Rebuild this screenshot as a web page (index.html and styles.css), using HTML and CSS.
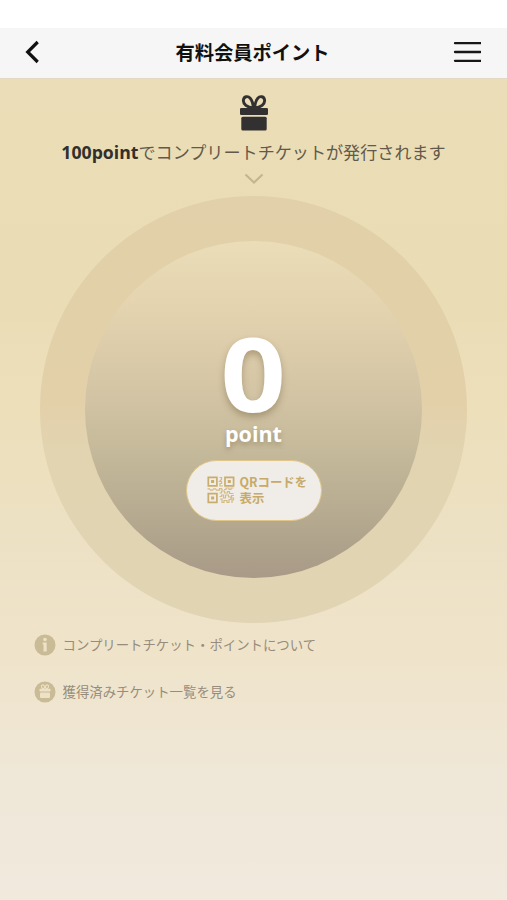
FILE: index.html
```html
<!DOCTYPE html>
<html lang="ja">
<head>
<meta charset="utf-8">
<meta name="viewport" content="width=device-width, initial-scale=1">
<title>有料会員ポイント</title>
<link rel="stylesheet" href="styles.css">
</head>
<body>
<header class="header">
  <svg class="back" width="16" height="24" viewBox="0 0 16 24"><path d="M13.700 2 3.700 12l10 10" fill="none" stroke="#111" stroke-width="3.2"/></svg>
  <h1 class="title">有料会員ポイント</h1>
  <svg class="menu" width="28" height="22" viewBox="0 0 28 22"><path d="M2 2.2h25.500M2 11h25.500M2 19.8h25.500" stroke="#161616" stroke-width="2.3" stroke-linecap="round"/></svg>
</header>
<main class="main">
  <svg class="gift" width="28" height="36" viewBox="0 0 28 36">
    <g fill="none" stroke="#333031" stroke-width="2.9"><path d="M13.4 13C7 12.5 3 9 3.4 5.200C3.800 1.200 8 .7 10.200 3.200C12.600 6 13.100 9 13.400 13Z"/><path d="M14.600 13C21 12.500 25 9 24.600 5.200C24.200 1.200 20 .7 17.800 3.200C15.400 6 14.900 9 14.600 13Z"/></g>
    <rect y="13" width="28" height="7" rx="1.300" fill="#333031"/>
    <rect x="1.300" y="21.700" width="25.400" height="13.800" rx="1.500" fill="#333031"/>
  </svg>
  <p class="lead"><strong class="lead-point">100point</strong>でコンプリートチケットが発行されます</p>
  <svg class="chevron" width="20" height="12" viewBox="0 0 20 12"><path d="m1.500 1.500 8.500 8 8.500-8" fill="none" stroke="#c4b58f" stroke-width="2.100"/></svg>
  <section class="ring">
    <div class="disc">
      <span class="score">0</span>
      <span class="unit">point</span>
      <button class="qr-button" type="button">
        <svg width="28" height="28" viewBox="0 0 28 28">
          <g fill="none" stroke="#c9ad6c" stroke-width="1.700"><path d="M1.300 1.300h8.600v8.600H1.300zM18 1.300h8.600v8.600H18zM1.300 17.700h8.600v8.600H1.300z"/></g>
          <path d="M4.100 4.100h3v3h-3zM20.800 4.100h3v3h-3zM4.100 20.500h3v3h-3z" fill="#c9ad6c"/>
          <path d="M12.500 1.500h2v2l-2 2h2v2h-1.500v2.500h3M.5 12.800h2l1 1.300h2l1-1.300h2l1 1.300h3v-1.500h2l1 1.500M17 13.500h2v-1.500h3v1.500h2v-1.500h2.500M12.500 17h2v-2h3v2h3v-1.500h2v2h4M12.500 20.500h2v-1.500h2v3h2v-3h3v2h3v-1.500h2.500M13 23h2v3.500h2v-2h3v2h2v-3h2v-1.500h2.500v2h-1.500v3" fill="none" stroke="#d3bb83" stroke-width="1.200"/>
        </svg>
        <span>QRコードを<br>表示</span>
      </button>
    </div>
  </section>
  <nav class="links">
    <a class="link">
      <svg width="22" height="22" viewBox="0 0 22 22"><circle cx="11" cy="11" r="10.500" fill="#c9bb96"/><circle cx="11" cy="5.500" r="1.800" fill="#eee2c6"/><path d="M8.700 8.500h4V17.500H9.500v-7H8.700z" fill="#eee2c6"/></svg>
      <span>コンプリートチケット・ポイントについて</span>
    </a>
    <a class="link">
      <svg width="22" height="22" viewBox="0 0 22 22"><circle cx="11" cy="11" r="10.500" fill="#c9bb96"/><g fill="none" stroke="#eee2c6" stroke-width="1.100"><ellipse cx="9" cy="5.700" rx="1.500" ry="1.900" transform="rotate(-25 9 5.700)"/><ellipse cx="13" cy="5.700" rx="1.500" ry="1.900" transform="rotate(25 13 5.700)"/></g><rect x="5.500" y="7.700" width="11" height="2.800" rx=".7" fill="#eee2c6"/><rect x="6" y="11.500" width="10" height="5.400" rx="1" fill="#eee2c6"/></svg>
      <span>獲得済みチケット一覧を見る</span>
    </a>
  </nav>
</main>
</body>
</html>
```
FILE: styles.css
```css
* { box-sizing: border-box; }
body {
  margin: 0;
  padding-top: 28px;
  height: 900px;
  overflow: hidden;
  display: flex;
  flex-direction: column;
  background: #fff;
  font-family: "Open Sans", "Noto Sans CJK JP", sans-serif;
}
.header {
  flex: none;
  height: 51px;
  padding: 0 26px 2px 24px;
  display: grid;
  grid-template-columns: 28px 1fr 28px;
  align-items: center;
  background: #f6f6f6;
  border-bottom: 1px solid #e3d8c4;
}
.title {
  margin: 0;
  font: 700 19.3px/28px "Noto Sans CJK JP", sans-serif;
  text-align: center;
  color: #111;
}
.main {
  flex: 1;
  display: flex;
  flex-direction: column;
  align-items: center;
  background: linear-gradient(#eaddb7 0%, #eaddb6 28%, #ecdfba 40%, #ede1c5 57%, #efe4ca 70%, #efe7d7 84%, #f0e9dd 100%);
}
.gift { margin-top: 16px; }
.lead {
  margin: 9px 0 0;
  font-size: 17.1px;
  line-height: 24px;
  color: #62594b;
  white-space: nowrap;
}
.lead-point { font-size: 17.7px; color: #332f2b; }
.chevron { margin-top: 8px; }
.ring {
  flex: none;
  width: 427px;
  height: 427px;
  margin-top: 11px;
  display: flex;
  align-items: center;
  justify-content: center;
  border-radius: 50%;
  background: linear-gradient(#e2d0aa, #e3d0a9 48%, #e2d4b1 60%, #e1d4b4);
}
.disc {
  width: 337px;
  height: 337px;
  padding-top: 83px;
  display: flex;
  flex-direction: column;
  align-items: center;
  border-radius: 50%;
  background: linear-gradient(#eaddb8, #e3d2ae 22%, #d5c6a6 42%, #c7bb9c 60%, #b7ab91 80%, #a89a87);
  color: #fff;
}
.score {
  font-size: 102px;
  font-weight: 700;
  line-height: 98px;
  transform: scaleX(1.12);
  text-shadow: 0 4px 7px rgba(100, 80, 45, .38);
}
.unit {
  margin-top: 1px;
  font-size: 21.5px;
  font-weight: 700;
  line-height: 22px;
  text-shadow: 0 3px 5px rgba(100, 80, 45, .35);
}
.qr-button {
  width: 136px;
  height: 61px;
  margin-top: 15px;
  padding: 0 13px 1px 20px;
  display: flex;
  align-items: center;
  gap: 5px;
  border: 1.5px solid #dfc588;
  border-radius: 31px;
  background: #f0ece7;
  color: #c7aa69;
  font: 700 12.4px/16.5px "Noto Sans CJK JP", sans-serif;
  text-align: left;
  white-space: nowrap;
}
.qr-button svg { flex: none; }
.links {
  align-self: stretch;
  margin: 11px 0 0 34px;
  display: flex;
  flex-direction: column;
  gap: 25px;
}
.link {
  display: flex;
  align-items: center;
  gap: 6.5px;
  font: 400 13.4px/22px "Noto Sans CJK JP", sans-serif;
  color: #978c7b;
}
.link span { margin-top: -2px; }
```
